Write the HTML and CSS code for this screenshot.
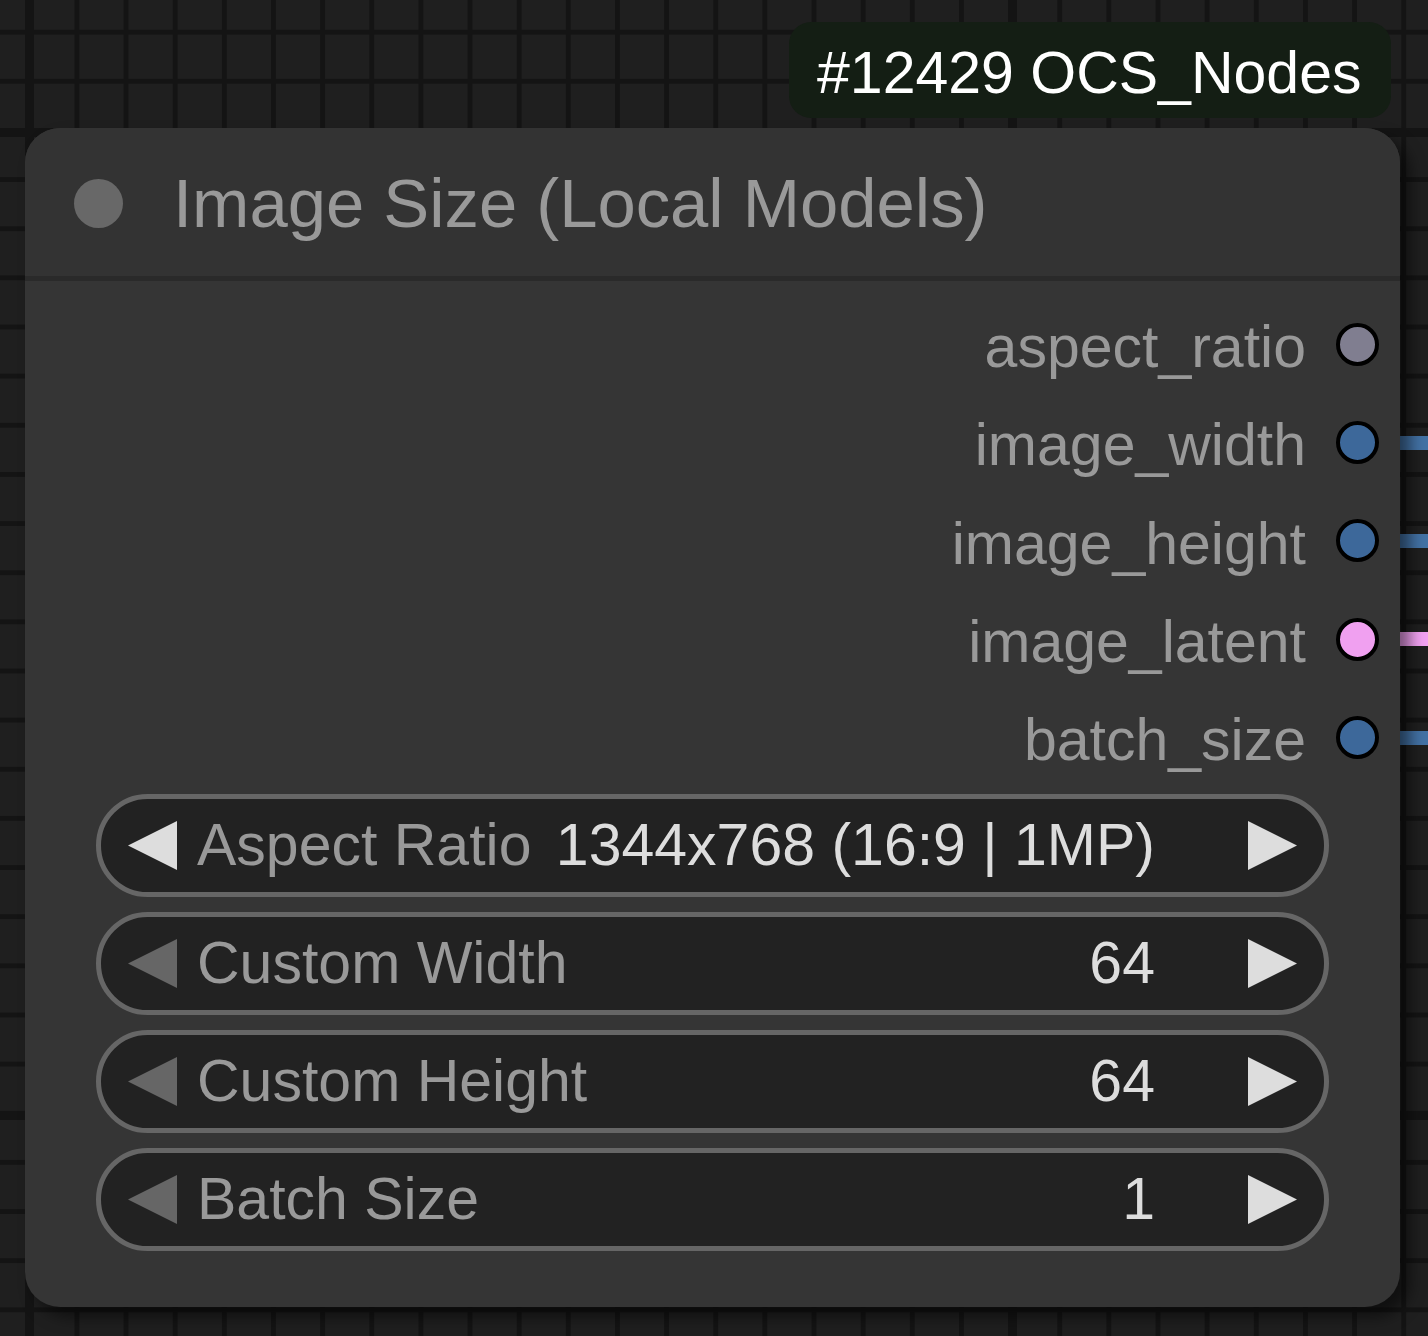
FILE: index.html
```html
<!DOCTYPE html>
<html>
<head>
<meta charset="utf-8">
<link rel="stylesheet" href="styles.css">
</head>
<body>
<div class="canvas">
  <div class="link link-blue link-1"></div>
  <div class="link link-blue link-2"></div>
  <div class="link link-pink link-3"></div>
  <div class="link link-blue link-4"></div>

  <div class="node">
    <div class="node-title">
      <span class="title-dot"></span>
      <span class="title-text">Image Size (Local Models)</span>
    </div>
    <div class="node-sep"></div>
    <div class="node-body">
      <div class="outputs">
        <div class="slot"><span class="slot-label">aspect_ratio</span><span class="pin pin-gray"></span></div>
        <div class="slot"><span class="slot-label">image_width</span><span class="pin pin-blue"></span></div>
        <div class="slot"><span class="slot-label">image_height</span><span class="pin pin-blue"></span></div>
        <div class="slot"><span class="slot-label">image_latent</span><span class="pin pin-pink"></span></div>
        <div class="slot"><span class="slot-label">batch_size</span><span class="pin pin-blue"></span></div>
      </div>
      <div class="widgets">
        <div class="widget">
          <svg class="arrow arrow-on" viewBox="0 0 49 49"><polygon points="0,24.5 49,0 49,49"/></svg>
          <span class="w-label">Aspect Ratio</span>
          <span class="w-value">1344x768 (16:9 | 1MP)</span>
          <svg class="arrow arrow-on" viewBox="0 0 49 49"><polygon points="0,0 49,24.5 0,49"/></svg>
        </div>
        <div class="widget">
          <svg class="arrow arrow-off" viewBox="0 0 49 49"><polygon points="0,24.5 49,0 49,49"/></svg>
          <span class="w-label">Custom Width</span>
          <span class="w-value">64</span>
          <svg class="arrow arrow-on" viewBox="0 0 49 49"><polygon points="0,0 49,24.5 0,49"/></svg>
        </div>
        <div class="widget">
          <svg class="arrow arrow-off" viewBox="0 0 49 49"><polygon points="0,24.5 49,0 49,49"/></svg>
          <span class="w-label">Custom Height</span>
          <span class="w-value">64</span>
          <svg class="arrow arrow-on" viewBox="0 0 49 49"><polygon points="0,0 49,24.5 0,49"/></svg>
        </div>
        <div class="widget">
          <svg class="arrow arrow-off" viewBox="0 0 49 49"><polygon points="0,24.5 49,0 49,49"/></svg>
          <span class="w-label">Batch Size</span>
          <span class="w-value">1</span>
          <svg class="arrow arrow-on" viewBox="0 0 49 49"><polygon points="0,0 49,24.5 0,49"/></svg>
        </div>
      </div>
    </div>
  </div>

  <div class="badge">#12429 OCS_Nodes</div>
</div>
</body>
</html>
```

FILE: styles.css
```css
* { box-sizing: border-box; }

html, body {
  margin: 0;
  padding: 0;
}

body {
  width: 1428px;
  height: 1336px;
  overflow: hidden;
  font-family: "Liberation Sans", Arial, sans-serif;
}

.canvas {
  position: relative;
  width: 1428px;
  height: 1336px;
  overflow: hidden;
  background-color: #1f1f1f;
  background-image:
    linear-gradient(to right, #141414 9px, transparent 9px),
    linear-gradient(to bottom, #141414 9px, transparent 9px),
    linear-gradient(to right, #141414 5px, transparent 5px),
    linear-gradient(to bottom, #141414 4.5px, transparent 4.5px);
  background-size: 983px 100%, 100% 983px, 49.15px 100%, 100% 49.15px;
  background-position: 25px 0, 0 128px, 25.3px 0, 0 29.7px;
}

/* links leaving the node */
.link {
  position: absolute;
  left: 1390px;
  width: 60px;
  height: 14px;
}
.link-blue { background: #4372a5; }
.link-pink { background: #f2a2f2; }
.link-1 { top: 436px; }
.link-2 { top: 534px; }
.link-3 { top: 632px; }
.link-4 { top: 731px; }

/* node */
.node {
  position: absolute;
  left: 25px;
  top: 128px;
  width: 1375px;
  height: 1179px;
  background: #353535;
  border-radius: 35px;
  box-shadow: 10px 10px 15px rgba(0, 0, 0, 0.5);
  display: flex;
  flex-direction: column;
}

.node-title {
  height: 148px;
  flex: none;
  display: flex;
  align-items: center;
  background: #333333;
  border-radius: 35px 35px 0 0;
  padding-left: 49px;
  padding-top: 2px;
}

.title-dot {
  width: 49px;
  height: 49px;
  border-radius: 50%;
  background: #686868;
  flex: none;
}

.title-text {
  margin-left: 50px;
  font-size: 68.8px;
  color: #999999;
  white-space: nowrap;
}

.node-sep {
  height: 5px;
  flex: none;
  background: #2a2a2a;
}

.node-body {
  display: flex;
  flex-direction: column;
  padding-top: 14px;
}

.outputs {
  display: flex;
  flex-direction: column;
}

.slot {
  height: 98.3px;
  display: flex;
  align-items: center;
  justify-content: flex-end;
  padding-right: 21.5px;
}

.slot-label {
  font-size: 59px;
  color: #999999;
  margin-right: 29.5px;
  margin-top: 6px;
  white-space: nowrap;
}

.pin {
  width: 43px;
  height: 43px;
  border-radius: 50%;
  border: 4.5px solid #000;
  flex: none;
}
.pin-gray { background: #807e90; }
.pin-blue { background: #3d689a; }
.pin-pink { background: #f0a0f0; }

.widgets {
  display: flex;
  flex-direction: column;
  gap: 15px;
  margin-top: 7.5px;
  padding: 0 71px;
}

.widget {
  height: 103px;
  border: 5px solid #666666;
  border-radius: 52px;
  background: #222222;
  display: flex;
  align-items: center;
  padding: 0 27px;
}

.arrow {
  width: 49px;
  height: 49px;
  flex: none;
}
.arrow-on { fill: #dddddd; }
.arrow-off { fill: #666666; }

.w-label {
  margin-left: 20px;
  font-size: 59px;
  color: #999999;
  white-space: nowrap;
}

.w-value {
  flex: 1;
  text-align: right;
  font-size: 59px;
  color: #dddddd;
  white-space: nowrap;
  margin-right: 93px;
}

/* badge */
.badge {
  position: absolute;
  left: 789px;
  top: 22px;
  width: 602px;
  height: 96px;
  background: #141e14;
  border-radius: 22px;
  color: #ffffff;
  font-size: 59px;
  display: flex;
  align-items: center;
  padding-left: 28px;
  padding-top: 5px;
  white-space: nowrap;
}
```
